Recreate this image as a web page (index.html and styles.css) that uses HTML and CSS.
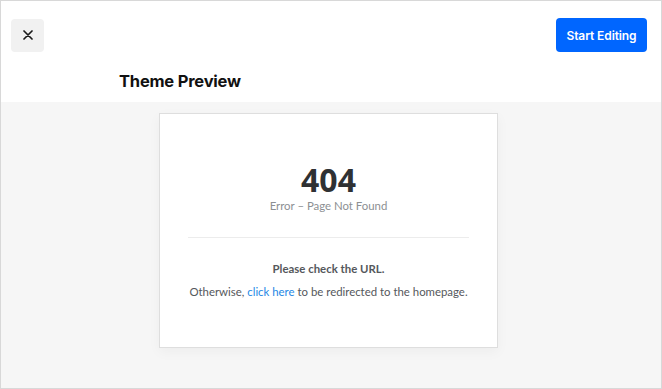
FILE: index.html
```html
<!DOCTYPE html>
<html lang="en">
<head>
    <meta charset="UTF-8">
    <meta name="viewport" content="width=device-width, initial-scale=1.0">
    <title>Theme Preview</title>
    <link rel="stylesheet" href="styles.css">
</head>
<body>
    <div class="frame">
        <!-- Top bar -->
        <header class="topbar">
            <div class="toolbar">
                <button class="close-btn" aria-label="Close">
                    <svg width="10" height="10" viewBox="0 0 10 10">
                        <path d="M1 1L9 9M9 1L1 9" stroke="#1a1a1a" stroke-width="1.7" stroke-linecap="round"/>
                    </svg>
                </button>
                <button class="start-btn">Start Editing</button>
            </div>
            <h1 class="title">Theme Preview</h1>
        </header>

        <!-- Preview area -->
        <main class="preview">
            <div class="card">
                <div class="code">404</div>
                <div class="subtitle">Error – Page Not Found</div>
                <hr class="divider">
                <p class="check">Please check the URL.</p>
                <p class="redirect">Otherwise, <a href="#">click here</a> to be redirected to the homepage.</p>
            </div>
        </main>
    </div>
</body>
</html>
```

FILE: styles.css
```css
* {
    margin: 0;
    padding: 0;
    box-sizing: border-box;
}

body {
    font-family: Inter, "Liberation Sans", sans-serif;
    background-color: #ffffff;
}

.frame {
    width: 662px;
    height: 389px;
    border: 1px solid #d8d8d8;
    display: flex;
    flex-direction: column;
    overflow: hidden;
}

/* Top bar */
.topbar {
    height: 101px;
    background-color: #ffffff;
    padding: 17px 14px 0 10px;
}

.toolbar {
    display: flex;
    justify-content: space-between;
    align-items: center;
}

.close-btn {
    width: 33px;
    height: 33px;
    border: none;
    border-radius: 4px;
    background-color: #f1f1f1;
    display: flex;
    align-items: center;
    justify-content: center;
}

.start-btn {
    width: 91px;
    height: 34px;
    border: none;
    border-radius: 4px;
    background-color: #0066ff;
    color: #ffffff;
    font-family: Inter, "Liberation Sans", sans-serif;
    font-size: 12px;
    font-weight: 600;
    letter-spacing: -0.1px;
}

.title {
    margin: 19px 0 0 108px;
    font-size: 16.5px;
    font-weight: 700;
    color: #111111;
    letter-spacing: -0.2px;
}

/* Preview area */
.preview {
    flex: 1;
    background-color: #f6f6f6;
    padding-top: 11px;
}

.card {
    width: 339px;
    height: 235px;
    margin-left: 158px;
    background-color: #ffffff;
    border: 1px solid #dedede;
    box-shadow: 0 4px 12px rgba(0, 0, 0, 0.04);
    padding: 50px 28px 0;
    text-align: center;
    font-family: Lato, "Liberation Sans", sans-serif;
}

.code {
    font-family: "Open Sans", "Liberation Sans", sans-serif;
    font-size: 32px;
    font-weight: 700;
    line-height: 32px;
    color: #2f3133;
}

.subtitle {
    font-size: 11.4px;
    line-height: 14px;
    color: #8c8f93;
    margin-top: 3px;
}

.divider {
    border: none;
    border-top: 1px solid #ececec;
    margin: 24px 0 24px;
}

.check {
    font-size: 11.4px;
    font-weight: 700;
    color: #55585c;
}

.redirect {
    margin-top: 10px;
    font-size: 11.4px;
    color: #55585c;
}

.redirect a {
    color: #1e88e5;
    text-decoration: none;
}
```
